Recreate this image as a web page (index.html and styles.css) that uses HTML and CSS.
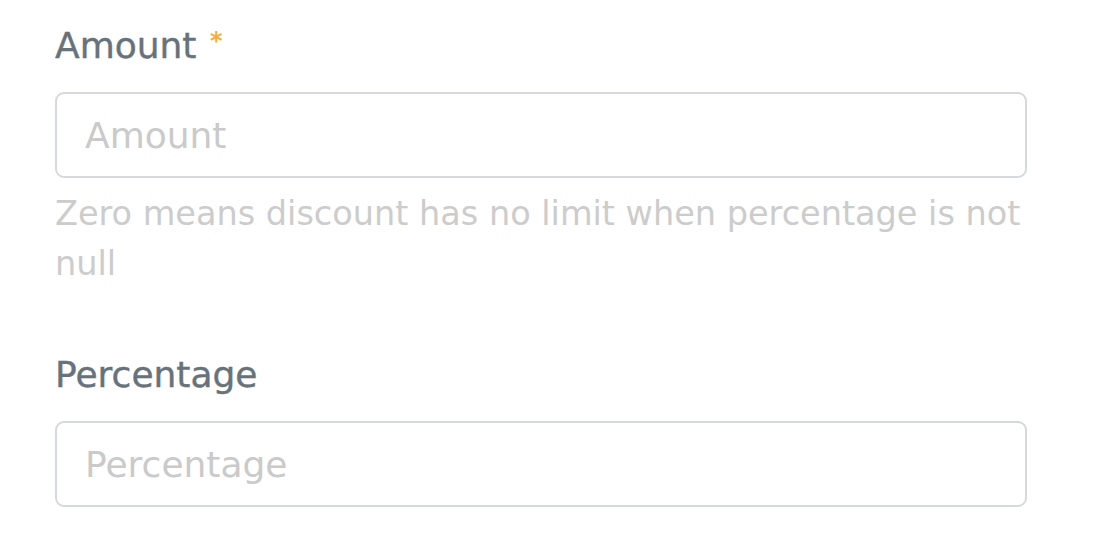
FILE: index.html
```html
<!DOCTYPE html>
<html lang="en">
<head>
<meta charset="utf-8">
<title>Discount form</title>
<link rel="stylesheet" href="styles.css">
</head>
<body>
<form class="form">
  <div class="field">
    <label class="label" for="amount">Amount <span class="req">*</span></label>
    <input class="input" id="amount" type="text" placeholder="Amount">
    <p class="help">Zero means discount has no limit when percentage is not null</p>
  </div>
  <div class="field field-second">
    <label class="label" for="percentage">Percentage</label>
    <input class="input" id="percentage" type="text" placeholder="Percentage">
  </div>
</form>
</body>
</html>
```
FILE: styles.css
```css
html, body {
  margin: 0;
  padding: 0;
  background: #ffffff;
}
body {
  font-family: "DejaVu Sans", "Open Sans", sans-serif;
}
.form {
  width: 972px;
  padding: 22px 0 0 55px;
  display: flex;
  flex-direction: column;
}
.field {
  display: flex;
  flex-direction: column;
}
.field-second {
  margin-top: 62px;
}
.label {
  font-size: 36px;
  font-weight: 400;
  color: #68727a;
  line-height: 48px;
  margin-bottom: 22px;
  -webkit-text-stroke: 0.4px #68727a;
}
.req {
  color: #f5ad3d;
  font-size: 24px;
  font-weight: 700;
  line-height: 0;
  vertical-align: 9px;
  -webkit-text-stroke: 0;
  margin-left: 2px;
}
.input {
  box-sizing: border-box;
  width: 972px;
  height: 86px;
  border: 2px solid #d6d9dc;
  border-radius: 9px;
  padding: 0 28px;
  font-family: inherit;
  font-size: 36px;
  color: #333;
  background: #fff;
  outline: none;
}
.input::placeholder {
  color: #cacaca;
}
.help {
  margin: 11px 0 0;
  font-size: 33.5px;
  line-height: 50px;
  color: #cccccc;
}
```
